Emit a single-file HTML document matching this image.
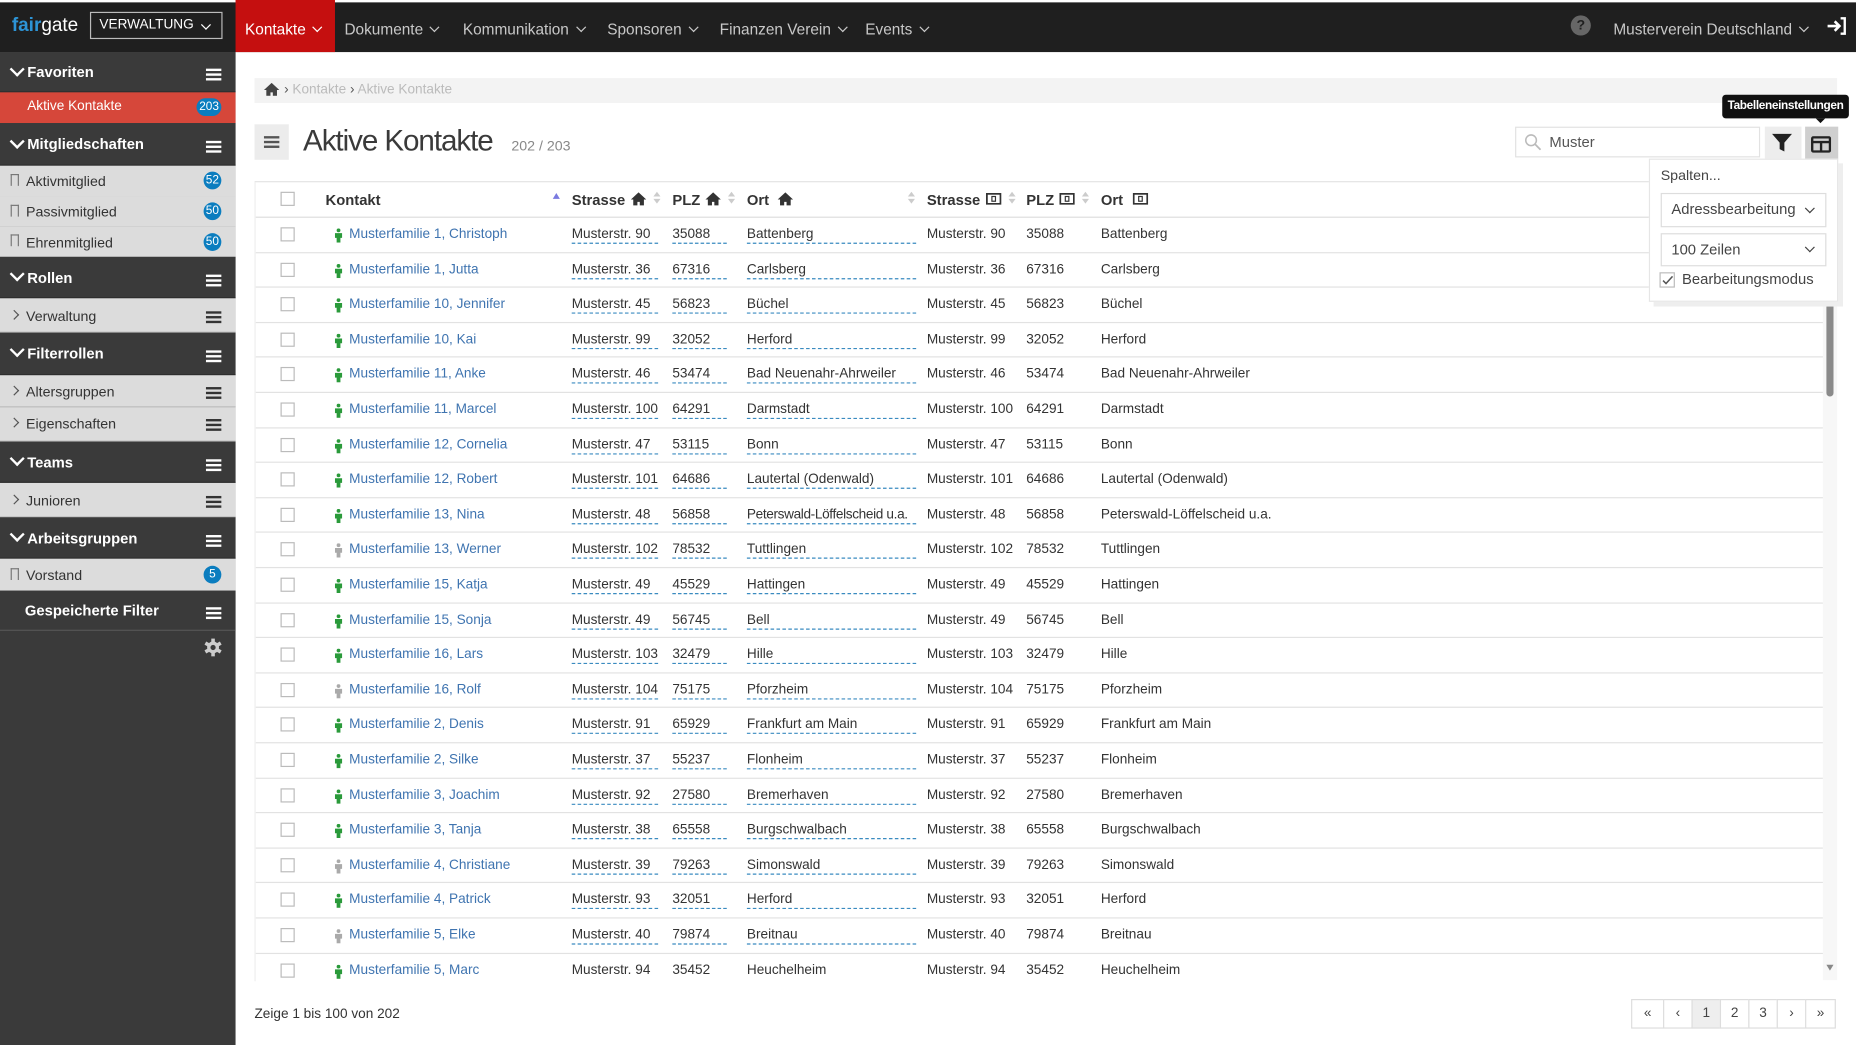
<!DOCTYPE html>
<html><head><meta charset="utf-8">
<style>
html,body{margin:0;padding:0;width:1856px;height:1045px;overflow:hidden;background:#fff}
#w{position:absolute;left:0;top:0;width:1568px;height:883px;transform:scale(1.18367);transform-origin:0 0;font-family:"Liberation Sans",sans-serif;color:#333;font-size:12px}
.a{position:absolute;white-space:nowrap}
#hdr{position:absolute;left:0;top:0;width:1568px;height:44px;background:#1f1f1f;border-top:2px solid #fff;box-sizing:border-box}
.nav{position:absolute;top:15px;color:#c8c8c8;font-size:13px}
.chev{display:inline-block;width:5px;height:5px;border-right:1.3px solid currentColor;border-bottom:1.3px solid currentColor;transform:rotate(45deg);margin-left:7px;position:relative;top:-3px}
#sb{position:absolute;left:0;top:44px;width:199px;height:839px;background:#3a3a3a}
.sd{position:absolute;left:0;width:199px;background:#3a3a3a;color:#fff;font-weight:bold;font-size:12.5px;box-sizing:border-box;border-bottom:1px solid #2e2e2e}
.sl{position:absolute;left:0;width:199px;background:#dcdcdc;color:#333;font-size:12px;box-sizing:border-box;border-bottom:1px solid #c4c4c4}
.ham{position:absolute;right:12px;width:13px;height:2px;background:currentColor;box-shadow:0 4px 0 currentColor,0 8px 0 currentColor}
.dv{display:inline-block;width:7px;height:7px;border-right:2px solid #fff;border-bottom:2px solid #fff;transform:rotate(45deg);position:absolute;left:10px}
.rt{display:inline-block;width:5px;height:5px;border-right:1.3px solid #555;border-bottom:1.3px solid #555;transform:rotate(-45deg);position:absolute;left:9px}
.bk{position:absolute;left:9px;width:7px;height:10px;border:1px solid #777;border-bottom:none;box-sizing:border-box}
.badge{position:absolute;right:12px;background:#0b7dbf;color:#fff;border-radius:9px;font-size:10px;text-align:center;height:15px;line-height:15px;min-width:15px;padding:0 2px;box-sizing:border-box}
#tbl{position:absolute;left:215px;top:153px;width:1325px;height:675px;overflow:hidden;border-top:1px solid #e3e3e3;border-left:1px solid #eee}
.r{position:absolute;left:0;width:1325px;height:29.6px;border-bottom:1px solid #e2e2e2;box-sizing:border-box;font-size:11.5px}
.r span{position:absolute;top:8px;white-space:nowrap}
.cb{position:absolute;left:21px;top:8px;width:12px;height:12px;border:1px solid #bbb;box-sizing:border-box;background:#fff}
.n{left:79px;color:#3f74b0}
.p{position:absolute;left:66px;top:9px}
.s,.z,.o{border-bottom:1px dashed #3a8bc0;padding-bottom:1px}
.s{left:267px;width:73px}.z{left:352px;width:46px}.o{left:415px;width:143px}
.s2{left:567px}.z2{left:651px}.o2{left:714px}
.th{position:absolute;top:8px;font-weight:bold;font-size:12.5px;color:#333}
.srt{position:absolute;top:9px;width:0;height:0;border-left:3px solid transparent;border-right:3px solid transparent}
.pg{position:absolute;top:844px;height:25px;border:1px solid #ddd;box-sizing:border-box;text-align:center;line-height:23px;font-size:11.5px;color:#444;background:#fff}
</style></head><body><div id="w">
<div id="hdr">
 <div class="a" style="left:10px;top:11px;font-size:16px;"><b style="color:#2d94d6">fair</b><span style="color:#fff">gate</span></div>
 <div class="a" style="left:76px;top:8px;width:112px;height:23px;border:1px solid #bbb;box-sizing:border-box;color:#fff;font-size:11.5px;line-height:21px;padding-left:7px">VERWALTUNG<span class="chev" style="position:absolute;right:10px;top:7px;border-color:#fff;border-width:1.8px"></span></div>
 <div class="a" style="left:199px;top:-2px;width:84px;height:44px;background:#c50f0f;"></div>
 <div class="nav" style="left:207px;color:#fff">Kontakte<span class="chev" style="border-width:1.8px"></span></div>
 <div class="nav" style="left:291px">Dokumente<span class="chev"></span></div>
 <div class="nav" style="left:391px">Kommunikation<span class="chev"></span></div>
 <div class="nav" style="left:513px">Sponsoren<span class="chev"></span></div>
 <div class="nav" style="left:608px">Finanzen Verein<span class="chev"></span></div>
 <div class="nav" style="left:731px">Events<span class="chev"></span></div>
 <div class="a" style="left:1327px;top:11px;width:17px;height:17px;border-radius:50%;background:#666;color:#1f1f1f;font-weight:bold;font-size:12px;text-align:center;line-height:17px">?</div>
 <div class="nav" style="left:1363px">Musterverein Deutschland<span class="chev"></span></div>
 <svg class="a" style="left:1543px;top:12px" width="18" height="16" viewBox="0 0 18 16"><path d="M1 8h10M7 4l4 4-4 4" stroke="#fff" stroke-width="2.2" fill="none"/><path d="M12 1.5h3.5v13H12" stroke="#fff" stroke-width="2" fill="none"/></svg>
</div>

<div id="sb">
 <div class="sd" style="top:0;height:34px"><span class="dv" style="top:10px"></span><span class="a" style="left:23px;top:10px">Favoriten</span><span class="ham" style="top:14px"></span></div>
 <div class="a" style="left:0;top:34px;width:199px;height:26px;background:#d6473a;color:#fff;font-size:11.5px"><span class="a" style="left:23px;top:6px">Aktive Kontakte</span><span class="badge" style="top:5px">203</span></div>
 <div class="sd" style="top:60px;height:36px"><span class="dv" style="top:11px"></span><span class="a" style="left:23px;top:11px">Mitgliedschaften</span><span class="ham" style="top:15px"></span></div>
 <div class="sl" style="top:96px;height:26px;border:none"><span class="bk" style="top:7px"></span><span class="a" style="left:22px;top:6px">Aktivmitglied</span><span class="badge" style="top:5px">52</span></div>
 <div class="sl" style="top:122px;height:25px;border:none"><span class="bk" style="top:7px"></span><span class="a" style="left:22px;top:6px">Passivmitglied</span><span class="badge" style="top:5px">50</span></div>
 <div class="sl" style="top:147px;height:26px;border:none"><span class="bk" style="top:7px"></span><span class="a" style="left:22px;top:7px">Ehrenmitglied</span><span class="badge" style="top:6px">50</span></div>
 <div class="sd" style="top:173px;height:35px"><span class="dv" style="top:10px"></span><span class="a" style="left:23px;top:11px">Rollen</span><span class="ham" style="top:15px"></span></div>
 <div class="sl" style="top:208px;height:29px"><span class="rt" style="top:11px"></span><span class="a" style="left:22px;top:8px">Verwaltung</span><span class="ham" style="top:11px;color:#333"></span></div>
 <div class="sd" style="top:237px;height:36px"><span class="dv" style="top:10px"></span><span class="a" style="left:23px;top:11px">Filterrollen</span><span class="ham" style="top:15px"></span></div>
 <div class="sl" style="top:273px;height:27px"><span class="rt" style="top:10px"></span><span class="a" style="left:22px;top:7px">Altersgruppen</span><span class="ham" style="top:10px;color:#333"></span></div>
 <div class="sl" style="top:300px;height:29px"><span class="rt" style="top:10px"></span><span class="a" style="left:22px;top:7px">Eigenschaften</span><span class="ham" style="top:10px;color:#333"></span></div>
 <div class="sd" style="top:329px;height:35px"><span class="dv" style="top:10px"></span><span class="a" style="left:23px;top:11px">Teams</span><span class="ham" style="top:15px"></span></div>
 <div class="sl" style="top:364px;height:29px"><span class="rt" style="top:11px"></span><span class="a" style="left:22px;top:8px">Junioren</span><span class="ham" style="top:11px;color:#333"></span></div>
 <div class="sd" style="top:393px;height:35px"><span class="dv" style="top:10px"></span><span class="a" style="left:23px;top:11px">Arbeitsgruppen</span><span class="ham" style="top:15px"></span></div>
 <div class="sl" style="top:428px;height:27px;border:none"><span class="bk" style="top:8px"></span><span class="a" style="left:22px;top:7px">Vorstand</span><span class="badge" style="top:6px">5</span></div>
 <div class="sd" style="top:455px;height:34px;border-bottom:1px solid #555"><span class="a" style="left:21px;top:10px">Gespeicherte Filter</span><span class="ham" style="top:14px"></span></div>
 <svg class="a" style="left:172px;top:495px" width="16" height="16" viewBox="0 0 16 16"><g fill="#ccc"><circle cx="8" cy="8" r="5"/><rect x="6.5" y="0.5" width="3" height="15"/><rect x="6.5" y="0.5" width="3" height="15" transform="rotate(60 8 8)"/><rect x="6.5" y="0.5" width="3" height="15" transform="rotate(120 8 8)"/></g><circle cx="8" cy="8" r="2.2" fill="#3a3a3a"/></svg>
</div>

<div class="a" style="left:215px;top:66px;width:1337px;height:21px;background:#f3f3f3"></div>
<svg class="a" style="left:223px;top:70px" width="13" height="11" viewBox="0 0 13 11"><path d="M6.5 0L0 6h2v5h3.5V8h2v3H11V6h2z" fill="#444"/></svg>
<div class="a" style="left:240px;top:70px;font-size:11.5px;color:#bbb"><span style="color:#555">›</span> Kontakte <span style="color:#555">›</span> Aktive Kontakte</div>

<div class="a" style="left:215px;top:105px;width:29px;height:30px;background:#ececec"></div>
<div class="ham" style="position:absolute;left:223px;right:auto;top:115px;color:#555;width:13px"></div>
<div class="a" style="left:256px;top:105px;font-size:25px;color:#3a3a3a;letter-spacing:-0.9px">Aktive Kontakte</div>
<div class="a" style="left:432px;top:116px;font-size:12px;color:#888">202 / 203</div>

<div class="a" style="left:1280px;top:107px;width:207px;height:26px;border:1px solid #e2e2e2;box-sizing:border-box"></div>
<svg class="a" style="left:1288px;top:113px" width="14" height="14" viewBox="0 0 14 14"><circle cx="5.5" cy="5.5" r="4.5" stroke="#bbb" stroke-width="1.3" fill="none"/><path d="M9 9l4.5 4.5" stroke="#bbb" stroke-width="1.5"/></svg>
<div class="a" style="left:1309px;top:113px;font-size:12.5px;color:#555">Muster</div>
<div class="a" style="left:1491px;top:107px;width:31px;height:28px;background:#ededed"></div>
<svg class="a" style="left:1497px;top:113px" width="18" height="16" viewBox="0 0 18 16"><path d="M0 0h17l-6.5 7.5V15l-4-2V7.5z" fill="#222"/></svg>
<div class="a" style="left:1525px;top:107px;width:28px;height:28px;background:#cfcfcf"></div>
<svg class="a" style="left:1530px;top:115px" width="17" height="14" viewBox="0 0 17 14"><rect x="1" y="1" width="15" height="12" rx="1" fill="none" stroke="#222" stroke-width="2"/><path d="M1 5h15M8.5 5v8" stroke="#222" stroke-width="2"/></svg>
<div class="a" style="left:1455px;top:80px;width:107px;height:20px;background:#111;border-radius:3px;color:#fff;font-size:10px;line-height:20px;text-align:center;font-weight:bold;letter-spacing:-0.3px">Tabelleneinstellungen</div>
<div class="a" style="left:1534px;top:100px;width:0;height:0;border-left:4px solid transparent;border-right:4px solid transparent;border-top:4px solid #111"></div>

<div id="tbl">
 <div class="r" style="top:0;height:30px;border-bottom:1px solid #ddd">
  <div class="cb"></div>
  <div class="th" style="left:59px">Kontakt</div>
  <div class="srt" style="left:251px;border-bottom:5px solid #7a7ae0"></div>
  <div class="th" style="left:267px">Strasse</div>
  <svg class="a" style="left:317px;top:8px" width="13" height="12" viewBox="0 0 13 11"><path d="M6.5 0L0 6h2v5h3.5V8h2v3H11V6h2z" fill="#333"/></svg>
  <div class="srt" style="left:336px;top:8px;border-bottom:4px solid #ccc"></div><div class="srt" style="left:336px;top:14px;border-top:4px solid #ccc"></div>
  <div class="th" style="left:352px">PLZ</div>
  <svg class="a" style="left:380px;top:8px" width="13" height="12" viewBox="0 0 13 11"><path d="M6.5 0L0 6h2v5h3.5V8h2v3H11V6h2z" fill="#333"/></svg>
  <div class="srt" style="left:399px;top:8px;border-bottom:4px solid #ccc"></div><div class="srt" style="left:399px;top:14px;border-top:4px solid #ccc"></div>
  <div class="th" style="left:415px">Ort</div>
  <svg class="a" style="left:441px;top:8px" width="13" height="12" viewBox="0 0 13 11"><path d="M6.5 0L0 6h2v5h3.5V8h2v3H11V6h2z" fill="#333"/></svg>
  <div class="srt" style="left:551px;top:8px;border-bottom:4px solid #ccc"></div><div class="srt" style="left:551px;top:14px;border-top:4px solid #ccc"></div>
  <div class="th" style="left:567px">Strasse</div>
  <svg class="a" style="left:617px;top:9px" width="13" height="10"><rect x="0.75" y="0.75" width="11.5" height="8.5" fill="none" stroke="#333" stroke-width="1.5"/><rect x="5" y="3" width="3" height="4" fill="none" stroke="#333"/></svg>
  <div class="srt" style="left:636px;top:8px;border-bottom:4px solid #ccc"></div><div class="srt" style="left:636px;top:14px;border-top:4px solid #ccc"></div>
  <div class="th" style="left:651px">PLZ</div>
  <svg class="a" style="left:679px;top:9px" width="13" height="10"><rect x="0.75" y="0.75" width="11.5" height="8.5" fill="none" stroke="#333" stroke-width="1.5"/><rect x="5" y="3" width="3" height="4" fill="none" stroke="#333"/></svg>
  <div class="srt" style="left:698px;top:8px;border-bottom:4px solid #ccc"></div><div class="srt" style="left:698px;top:14px;border-top:4px solid #ccc"></div>
  <div class="th" style="left:714px">Ort</div>
  <svg class="a" style="left:741px;top:9px" width="13" height="10"><rect x="0.75" y="0.75" width="11.5" height="8.5" fill="none" stroke="#333" stroke-width="1.5"/><rect x="5" y="3" width="3" height="4" fill="none" stroke="#333"/></svg>
 </div>
 <svg width="0" height="0" style="position:absolute"><defs><symbol id="pg" viewBox="0 0 8 12"><circle cx="4" cy="1.6" r="1.6"/><path d="M1 4h6v4H5.6v4H2.4V8H1z"/></symbol></defs></svg>
 <div class="r" style="top:30px"><div class="cb"></div><svg class="p" width="8" height="12" fill="#2a9a3a"><use href="#pg"/></svg><span class="n">Musterfamilie 1, Christoph</span><span class="s">Musterstr. 90</span><span class="z">35088</span><span class="o">Battenberg</span><span class="s2">Musterstr. 90</span><span class="z2">35088</span><span class="o2">Battenberg</span></div>
 <div class="r" style="top:59.6px"><div class="cb"></div><svg class="p" width="8" height="12" fill="#2a9a3a"><use href="#pg"/></svg><span class="n">Musterfamilie 1, Jutta</span><span class="s">Musterstr. 36</span><span class="z">67316</span><span class="o">Carlsberg</span><span class="s2">Musterstr. 36</span><span class="z2">67316</span><span class="o2">Carlsberg</span></div>
 <div class="r" style="top:89.2px"><div class="cb"></div><svg class="p" width="8" height="12" fill="#2a9a3a"><use href="#pg"/></svg><span class="n">Musterfamilie 10, Jennifer</span><span class="s">Musterstr. 45</span><span class="z">56823</span><span class="o">Büchel</span><span class="s2">Musterstr. 45</span><span class="z2">56823</span><span class="o2">Büchel</span></div>
 <div class="r" style="top:118.8px"><div class="cb"></div><svg class="p" width="8" height="12" fill="#2a9a3a"><use href="#pg"/></svg><span class="n">Musterfamilie 10, Kai</span><span class="s">Musterstr. 99</span><span class="z">32052</span><span class="o">Herford</span><span class="s2">Musterstr. 99</span><span class="z2">32052</span><span class="o2">Herford</span></div>
 <div class="r" style="top:148.4px"><div class="cb"></div><svg class="p" width="8" height="12" fill="#2a9a3a"><use href="#pg"/></svg><span class="n">Musterfamilie 11, Anke</span><span class="s">Musterstr. 46</span><span class="z">53474</span><span class="o">Bad Neuenahr-Ahrweiler</span><span class="s2">Musterstr. 46</span><span class="z2">53474</span><span class="o2">Bad Neuenahr-Ahrweiler</span></div>
 <div class="r" style="top:178px"><div class="cb"></div><svg class="p" width="8" height="12" fill="#2a9a3a"><use href="#pg"/></svg><span class="n">Musterfamilie 11, Marcel</span><span class="s">Musterstr. 100</span><span class="z">64291</span><span class="o">Darmstadt</span><span class="s2">Musterstr. 100</span><span class="z2">64291</span><span class="o2">Darmstadt</span></div>
 <div class="r" style="top:207.6px"><div class="cb"></div><svg class="p" width="8" height="12" fill="#2a9a3a"><use href="#pg"/></svg><span class="n">Musterfamilie 12, Cornelia</span><span class="s">Musterstr. 47</span><span class="z">53115</span><span class="o">Bonn</span><span class="s2">Musterstr. 47</span><span class="z2">53115</span><span class="o2">Bonn</span></div>
 <div class="r" style="top:237.2px"><div class="cb"></div><svg class="p" width="8" height="12" fill="#2a9a3a"><use href="#pg"/></svg><span class="n">Musterfamilie 12, Robert</span><span class="s">Musterstr. 101</span><span class="z">64686</span><span class="o">Lautertal (Odenwald)</span><span class="s2">Musterstr. 101</span><span class="z2">64686</span><span class="o2">Lautertal (Odenwald)</span></div>
 <div class="r" style="top:266.8px"><div class="cb"></div><svg class="p" width="8" height="12" fill="#2a9a3a"><use href="#pg"/></svg><span class="n">Musterfamilie 13, Nina</span><span class="s">Musterstr. 48</span><span class="z">56858</span><span class="o" style="letter-spacing:-0.3px">Peterswald-Löffelscheid u.a.</span><span class="s2">Musterstr. 48</span><span class="z2">56858</span><span class="o2">Peterswald-Löffelscheid u.a.</span></div>
 <div class="r" style="top:296.4px"><div class="cb"></div><svg class="p" width="8" height="12" fill="#aaa"><use href="#pg"/></svg><span class="n">Musterfamilie 13, Werner</span><span class="s">Musterstr. 102</span><span class="z">78532</span><span class="o">Tuttlingen</span><span class="s2">Musterstr. 102</span><span class="z2">78532</span><span class="o2">Tuttlingen</span></div>
 <div class="r" style="top:326px"><div class="cb"></div><svg class="p" width="8" height="12" fill="#2a9a3a"><use href="#pg"/></svg><span class="n">Musterfamilie 15, Katja</span><span class="s">Musterstr. 49</span><span class="z">45529</span><span class="o">Hattingen</span><span class="s2">Musterstr. 49</span><span class="z2">45529</span><span class="o2">Hattingen</span></div>
 <div class="r" style="top:355.6px"><div class="cb"></div><svg class="p" width="8" height="12" fill="#2a9a3a"><use href="#pg"/></svg><span class="n">Musterfamilie 15, Sonja</span><span class="s">Musterstr. 49</span><span class="z">56745</span><span class="o">Bell</span><span class="s2">Musterstr. 49</span><span class="z2">56745</span><span class="o2">Bell</span></div>
 <div class="r" style="top:385.2px"><div class="cb"></div><svg class="p" width="8" height="12" fill="#2a9a3a"><use href="#pg"/></svg><span class="n">Musterfamilie 16, Lars</span><span class="s">Musterstr. 103</span><span class="z">32479</span><span class="o">Hille</span><span class="s2">Musterstr. 103</span><span class="z2">32479</span><span class="o2">Hille</span></div>
 <div class="r" style="top:414.8px"><div class="cb"></div><svg class="p" width="8" height="12" fill="#aaa"><use href="#pg"/></svg><span class="n">Musterfamilie 16, Rolf</span><span class="s">Musterstr. 104</span><span class="z">75175</span><span class="o">Pforzheim</span><span class="s2">Musterstr. 104</span><span class="z2">75175</span><span class="o2">Pforzheim</span></div>
 <div class="r" style="top:444.4px"><div class="cb"></div><svg class="p" width="8" height="12" fill="#2a9a3a"><use href="#pg"/></svg><span class="n">Musterfamilie 2, Denis</span><span class="s">Musterstr. 91</span><span class="z">65929</span><span class="o">Frankfurt am Main</span><span class="s2">Musterstr. 91</span><span class="z2">65929</span><span class="o2">Frankfurt am Main</span></div>
 <div class="r" style="top:474px"><div class="cb"></div><svg class="p" width="8" height="12" fill="#2a9a3a"><use href="#pg"/></svg><span class="n">Musterfamilie 2, Silke</span><span class="s">Musterstr. 37</span><span class="z">55237</span><span class="o">Flonheim</span><span class="s2">Musterstr. 37</span><span class="z2">55237</span><span class="o2">Flonheim</span></div>
 <div class="r" style="top:503.6px"><div class="cb"></div><svg class="p" width="8" height="12" fill="#2a9a3a"><use href="#pg"/></svg><span class="n">Musterfamilie 3, Joachim</span><span class="s">Musterstr. 92</span><span class="z">27580</span><span class="o">Bremerhaven</span><span class="s2">Musterstr. 92</span><span class="z2">27580</span><span class="o2">Bremerhaven</span></div>
 <div class="r" style="top:533.2px"><div class="cb"></div><svg class="p" width="8" height="12" fill="#2a9a3a"><use href="#pg"/></svg><span class="n">Musterfamilie 3, Tanja</span><span class="s">Musterstr. 38</span><span class="z">65558</span><span class="o">Burgschwalbach</span><span class="s2">Musterstr. 38</span><span class="z2">65558</span><span class="o2">Burgschwalbach</span></div>
 <div class="r" style="top:562.8px"><div class="cb"></div><svg class="p" width="8" height="12" fill="#aaa"><use href="#pg"/></svg><span class="n">Musterfamilie 4, Christiane</span><span class="s">Musterstr. 39</span><span class="z">79263</span><span class="o">Simonswald</span><span class="s2">Musterstr. 39</span><span class="z2">79263</span><span class="o2">Simonswald</span></div>
 <div class="r" style="top:592.4px"><div class="cb"></div><svg class="p" width="8" height="12" fill="#2a9a3a"><use href="#pg"/></svg><span class="n">Musterfamilie 4, Patrick</span><span class="s">Musterstr. 93</span><span class="z">32051</span><span class="o">Herford</span><span class="s2">Musterstr. 93</span><span class="z2">32051</span><span class="o2">Herford</span></div>
 <div class="r" style="top:622px"><div class="cb"></div><svg class="p" width="8" height="12" fill="#aaa"><use href="#pg"/></svg><span class="n">Musterfamilie 5, Elke</span><span class="s">Musterstr. 40</span><span class="z">79874</span><span class="o">Breitnau</span><span class="s2">Musterstr. 40</span><span class="z2">79874</span><span class="o2">Breitnau</span></div>
 <div class="r" style="top:651.6px;border:none"><div class="cb"></div><svg class="p" width="8" height="12" fill="#2a9a3a"><use href="#pg"/></svg><span class="n">Musterfamilie 5, Marc</span><span class="s" style="border:none">Musterstr. 94</span><span class="z" style="border:none">35452</span><span class="o" style="border:none">Heuchelheim</span><span class="s2">Musterstr. 94</span><span class="z2">35452</span><span class="o2">Heuchelheim</span></div>
</div>
<div class="a" style="left:1540px;top:153px;width:12px;height:675px;background:#f7f7f7"></div>
<div class="a" style="left:1543px;top:250px;width:6px;height:85px;background:#8a8a8a;border-radius:3px"></div>
<div class="a" style="left:1543px;top:815px;width:0;height:0;border-left:3.5px solid transparent;border-right:3.5px solid transparent;border-top:5px solid #888"></div>

<div class="a" style="left:1397px;top:138px;width:160px;height:121px;background:#eee"></div>
<div class="a" style="left:1393px;top:134px;width:160px;height:121px;background:#fff;border:1px solid #e6e6e6;box-sizing:border-box"></div>
<div class="a" style="left:1403px;top:141px;font-size:12px;color:#444">Spalten...</div>
<div class="a" style="left:1403px;top:163px;width:140px;height:29px;border:1px solid #ddd;box-sizing:border-box;font-size:12.5px;color:#444;line-height:27px;padding-left:8px">Adressbearbeitung<span class="chev" style="position:absolute;right:10px;top:9px;border-color:#444"></span></div>
<div class="a" style="left:1403px;top:197px;width:140px;height:28px;border:1px solid #ddd;box-sizing:border-box;font-size:12.5px;color:#444;line-height:26px;padding-left:8px">100 Zeilen<span class="chev" style="position:absolute;right:10px;top:8px;border-color:#444"></span></div>
<div class="a" style="left:1402px;top:230px;width:13px;height:13px;border:1px solid #bbb;box-sizing:border-box"></div>
<svg class="a" style="left:1404px;top:232px" width="10" height="9"><path d="M1 5l2.5 2.5L9 1.5" stroke="#555" stroke-width="1.3" fill="none"/></svg>
<div class="a" style="left:1421px;top:229px;font-size:12.5px;color:#444">Bearbeitungsmodus</div>

<div class="a" style="left:215px;top:851px;font-size:11.5px;color:#333">Zeige 1 bis 100 von 202</div>
<div class="pg" style="left:1378px;width:28px">«</div>
<div class="pg" style="left:1405px;width:25px">‹</div>
<div class="pg" style="left:1429px;width:25px;background:#eee">1</div>
<div class="pg" style="left:1453px;width:25px">2</div>
<div class="pg" style="left:1477px;width:25px">3</div>
<div class="pg" style="left:1501px;width:25px">›</div>
<div class="pg" style="left:1525px;width:26px">»</div>
</div></body></html>
